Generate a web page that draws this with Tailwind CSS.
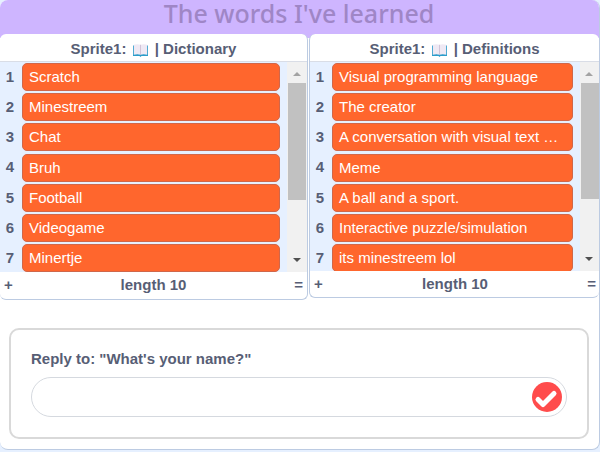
<!DOCTYPE html>
<html lang="en">
<head>
<meta charset="utf-8">
<title>Dictionary</title>
<script src="https://cdn.jsdelivr.net/npm/@tailwindcss/browser@4"></script>
</head>
<body class="h-[452px] w-[600px] overflow-hidden bg-[#e6f0ff] font-['Liberation_Sans',Arial,sans-serif] text-[15px] text-[#575e75]">
<main class="flex h-[450px] w-[600px] flex-col overflow-hidden rounded-lg border-r border-b border-[#bccbe2] bg-white">
  <div class="h-[38px] shrink-0 bg-[#ceb5ff] text-center">
    <h1 class="w-[598px] font-['Noto_Sans',sans-serif] text-[25px] leading-[27px] font-medium whitespace-nowrap text-[#9f86c6]">The words I've learned</h1>
  </div>
  <div class="-mt-1 flex h-[266px] shrink-0 items-start gap-px">
    <section class="flex h-[266px] w-[308px] shrink-0 flex-col overflow-hidden rounded-md border-r border-b border-[#bccbe2] bg-white">
      <header class="flex h-7 shrink-0 items-center justify-center border-b border-[#d9dde6] pt-1 font-bold whitespace-pre">Sprite1: <svg class="mx-[2.5px] mt-0.5 h-[13px] w-[15px]" viewBox="0 0 15 13"><path d="M0 1.500h15V12H8.500l-1 1-1-1H0z" fill="#2b9cca"/><path d="M.8.800Q4.500-.2 7.500.8q3-1 6.700 0v10q-3.700-1-6.700 0-3-1-6.700 0z" fill="#efe9f4"/><path d="M7.500.800v10" stroke="#c5b5cb" stroke-width=".7"/></svg> | Dictionary</header>
      <div class="flex h-[210px] shrink-0 overflow-hidden bg-[#e6f0ff]">
        <ol class="flex w-[280px] shrink-0 flex-col gap-[2.2px] pt-px" data-rows="Scratch|Minestreem|Chat|Bruh|Football|Videogame|Minertje"></ol>
        <div class="ml-[7px] flex w-5 shrink-0 flex-col items-center bg-[#f1f1f1]">
          <svg class="h-[21px] w-5 shrink-0" viewBox="0 0 20 21"><path d="M6 14l4-4 4 4z" fill="#a3a3a3"/></svg>
          <div class="h-[117px] w-[18px] bg-[#c1c1c1]"></div>
          <svg class="mt-auto h-6 w-5 shrink-0" viewBox="0 0 20 24"><path d="M6 10h8l-4 4z" fill="#505050"/></svg>
        </div>
      </div>
      <footer class="flex h-[27px] items-center justify-between pr-1 pl-1 pb-px font-bold"><span>+</span><span>length 10</span><span>=</span></footer>
    </section>
    <section class="flex h-[264px] w-[290px] shrink-0 flex-col overflow-hidden rounded-md border-b border-l border-[#bccbe2] bg-white">
      <header class="flex h-7 shrink-0 items-center justify-center border-b border-[#d9dde6] pt-1 font-bold whitespace-pre">Sprite1: <svg class="mx-[2.5px] mt-0.5 h-[13px] w-[15px]" viewBox="0 0 15 13"><path d="M0 1.500h15V12H8.500l-1 1-1-1H0z" fill="#2b9cca"/><path d="M.8.800Q4.500-.2 7.500.8q3-1 6.700 0v10q-3.700-1-6.700 0-3-1-6.700 0z" fill="#efe9f4"/><path d="M7.500.800v10" stroke="#c5b5cb" stroke-width=".7"/></svg> | Definitions</header>
      <div class="flex h-[209px] shrink-0 overflow-hidden bg-[#e6f0ff]">
        <ol class="flex w-[263px] shrink-0 flex-col gap-[2.2px] pt-px" data-rows="Visual programming language|The creator|A conversation with visual text …|Meme|A ball and a sport.|Interactive puzzle/simulation|its minestreem lol"></ol>
        <div class="ml-[7px] flex w-[19px] shrink-0 flex-col items-end bg-[#f1f1f1]">
          <svg class="h-[21px] w-5 shrink-0" viewBox="0 0 20 21"><path d="M6 14l4-4 4 4z" fill="#a3a3a3"/></svg>
          <div class="h-[116px] w-[18px] bg-[#c1c1c1]"></div>
          <svg class="mt-auto h-6 w-5 shrink-0" viewBox="0 0 20 24"><path d="M6 10h8l-4 4z" fill="#505050"/></svg>
        </div>
      </div>
      <footer class="flex h-[26px] items-center justify-between pt-px pr-[3px] pl-1 font-bold"><span>+</span><span>length 10</span><span>=</span></footer>
    </section>
  </div>
  <div class="mt-7 ml-[9px] h-[111px] w-[580px] shrink-0 rounded-[10px] border-2 border-[#d9d9d9] bg-white pt-5 pl-5">
    <label for="reply" class="block h-[27px] leading-[18px] font-bold">Reply to: "What's your name?"</label>
    <div class="flex h-10 w-[536px] items-center rounded-full border border-[#d5d9df] pr-1">
      <input id="reply" class="min-w-0 flex-1 outline-none">
      <svg class="h-[30px] w-[30px] shrink-0" viewBox="0 0 30 30"><circle cx="15" cy="15" r="15" fill="#ff4c4c"/><path d="M6 17.500l5 5L22 11.500" fill="none" stroke="#fff" stroke-width="5" stroke-linecap="round" stroke-linejoin="round"/></svg>
    </div>
  </div>
</main>
<template id="row">
  <li class="flex h-7 shrink-0 items-center">
    <span class="w-[22px] shrink-0 pr-0.5 text-center font-bold"></span>
    <span class="h-7 min-w-0 flex-1 truncate rounded-[5px] border border-[#d0674a] bg-[#ff662d] pl-1.5 leading-[26px] text-white"></span>
  </li>
</template>
<script>
document.querySelectorAll('ol').forEach(list => {
  list.dataset.rows.split('|').forEach((text, i) => {
    const row = document.getElementById('row').content.cloneNode(true);
    const [number, value] = row.querySelectorAll('span');
    number.textContent = i + 1;
    value.textContent = text;
    list.append(row);
  });
});
</script>
</body>
</html>
